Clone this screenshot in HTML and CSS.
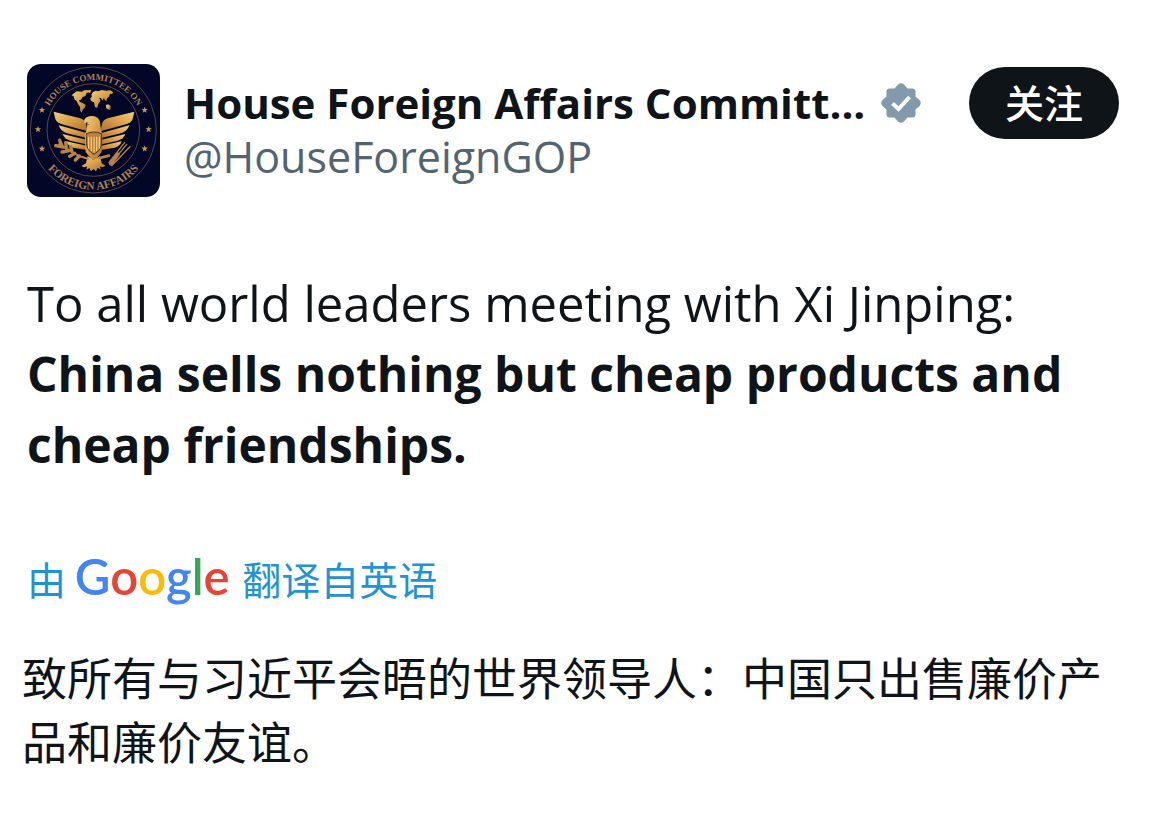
FILE: index.html
```html
<!DOCTYPE html>
<html lang="en">
<head>
    <meta charset="UTF-8">
    <meta name="viewport" content="width=device-width, initial-scale=1.0">
    <title>House Foreign Affairs Committee</title>
    <link rel="stylesheet" href="styles.css">
</head>
<body>
    <article class="post">
        <header class="post-header">
            <svg class="avatar" viewBox="21 24 399 399" role="img" aria-label="House Committee on Foreign Affairs seal">
                <defs>
                    <linearGradient id="gold" x1="0" y1="0" x2="1" y2="1">
                        <stop offset="0" stop-color="#f3cf7c"/>
                        <stop offset="0.5" stop-color="#d99f45"/>
                        <stop offset="1" stop-color="#a8702f"/>
                    </linearGradient>
                    <path id="arc-top" d="M70 222a150 150 0 0 1 300 0"/>
                    <path id="arc-bottom" d="M41 222a179 179 0 0 0 358 0"/>
                    <path id="star" d="M0-10 2.6-3.2 9.8-3 4 1.6 6 8.6 0 4.5-6 8.6-4 1.6-9.8-3-2.6-3.2z"/>
                    <g id="wing">
                        <path d="M101 167L178 186Q192 190 197 200L203 226 126 205Q110 200 106 189z"/>
                        <path d="M116 208L200 231 204 247 141 232Q122 226 116 208z"/>
                        <path d="M128 234L202 252 205 266 151 254Q133 249 128 234z"/>
                        <path d="M139 256L203 270 206 283 160 275Q144 271 139 256z"/>
                    </g>
                </defs>
                <rect x="21" y="24" width="399" height="399" fill="#020727"/>
                <g fill="none" stroke="#85684f" stroke-width="2">
                    <circle cx="220" cy="222" r="189"/>
                    <circle cx="220" cy="222" r="139"/>
                </g>
                <g class="seal-text">
                    <text font-size="27"><textPath href="#arc-top" startOffset="50%">HOUSE COMMITTEE ON</textPath></text>
                    <text font-size="34"><textPath href="#arc-bottom" startOffset="50%">FOREIGN AFFAIRS</textPath></text>
                </g>
                <g fill="#c99858">
                    <use href="#star" x="66" y="162"/>
                    <use href="#star" x="54" y="220"/>
                    <use href="#star" x="66" y="278"/>
                    <use href="#star" x="374" y="162"/>
                    <use href="#star" x="386" y="220"/>
                    <use href="#star" x="374" y="278"/>
                </g>
                <g fill="url(#gold)">
                    <path d="M162 112l8-6 16 1 6-4 14-1 2 6-8 3-4 9-8 3-5 8-6 2 3 5 8 3 9 6-3 8-6 6-3 9-4-5-1-12-6-9-4-9-6-4-3-10-6-3z"/>
                    <path d="M206 103l8-2-3 9-5 1z"/>
                    <path d="M214 116l4-7 9-5 8 2 10-4 14 2 12-1 9 6-4 5-6-1-3 9-6 5-2 8-5-4-2-6-5 9-4-8-6-1 3 5 1 6-6 7-3 12-7-1-3-15-9-4-2-8 5-6z"/>
                    <path d="M258 147l7-2 7 6-1 10-9-1-4-5z"/>
                </g>
                <g fill="url(#gold)">
                    <use href="#wing"/>
                    <use href="#wing" transform="matrix(-1 0 0 1 444 0)"/>
                    <path d="M193 191c4-8 14-12 25-11 13 1 21 9 22 19l3 22 5 16-3 51-17 21-6 4-8-4-17-21-3-51 7-18 1-21-9 5z"/>
                    <path d="M203 300l17 12 20-12 5 22 12 8-11 4-6-3 2 10-9-6-5 11-8-7-7 7-5-10-9 5 2-10-9 3-8-4 14-8z"/>
                </g>
                <path d="M199 233q22-10 46 0v29q-2 22-23 33-21-11-23-33z" fill="#ba8037" stroke="#4c351e" stroke-width="3"/>
                <path d="M206 242v36M214 242v43M222 242v48M230 242v43M238 242v36" stroke="#f0c578" stroke-width="4"/>
                <path d="M199 204q5 3 9 1" fill="none" stroke="#654522" stroke-width="2"/>
                <g fill="none" stroke="#b98343" stroke-linecap="round">
                    <path d="M204 308l-25-7-62-36" stroke-width="6"/>
                    <path d="M130 273l-23-4M126 270l-7-17M140 279l-3-19M148 284l-22 4M156 287l-4-15M164 292l-15 9M178 300l-12 12" stroke-width="10"/>
                    <path d="M239 306l28-7" stroke-width="8"/>
                    <path d="M270 326l50-61M275 329l55-57M267 319l47-59" stroke-width="4"/>
                    <path d="M273 322l20-27" stroke-width="12"/>
                </g>
            </svg>
            <div class="account">
                <div class="account-name">
                    <h1>House Foreign Affairs Committ...</h1>
                    <svg class="badge" viewBox="0 0 40 40" role="img" aria-label="Verified account">
                        <path d="M17 1.5Q20-1 23 1.5L26.500 5.500H31.500Q34.500 5.500 34.500 8.500V13.500L38.500 17Q41 20 38.500 23L34.500 26.500V31.500Q34.500 34.500 31.500 34.500H26.500L23 38.500Q20 41 17 38.500L13.500 34.500H8.500Q5.500 34.500 5.500 31.500V26.500L1.500 23Q-1 20 1.500 17L5.500 13.500V8.500Q5.500 5.500 8.500 5.500H13.500Z" fill="#829aab"/>
                        <path d="M11.500 20.500l6 5.500L28.500 14" fill="none" stroke="#fff" stroke-width="4"/>
                    </svg>
                </div>
                <p class="handle">@HouseForeignGOP</p>
            </div>
            <button type="button" class="follow">关注</button>
        </header>
        <p class="post-text">To all world leaders meeting with Xi Jinping: <strong>China sells nothing but cheap products and cheap friendships.</strong></p>
        <p class="translated-by" lang="zh-CN">由 <span class="google"><span class="blue">G</span><span class="red">o</span><span class="yellow">o</span><span class="blue">g</span><span class="green">l</span><span class="red">e</span></span> 翻译自英语</p>
        <p class="translation" lang="zh-CN">致所有与习近平会晤的世界领导人：中国只出售廉价产品和廉价友谊。</p>
    </article>
</body>
</html>
```

FILE: styles.css
```css
body {
    font-family: "Open Sans", "Noto Sans CJK SC", sans-serif;
    margin: 0;
    background-color: #fff;
    color: #0f1419;
}
h1, p {
    margin: 0;
}
.post {
    padding: 64px 51px 48px 27px;
}
.post-header {
    display: flex;
    align-items: flex-start;
    gap: 24px;
}
.avatar {
    flex: none;
    width: 133px;
    height: 133px;
    border-radius: 14px;
}
.seal-text {
    font-family: "Liberation Serif", serif;
    font-weight: 700;
    fill: #b08058;
    text-anchor: middle;
}
.account {
    flex: 1;
    min-width: 0;
    padding-top: 12px;
}
.account-name {
    display: flex;
    align-items: center;
    gap: 16px;
}
.account-name h1 {
    font-size: 42px;
    line-height: 54px;
    font-weight: 700;
    white-space: nowrap;
}
.badge {
    flex: none;
    width: 40px;
    height: 40px;
}
.handle {
    color: #536471;
    font-size: 43px;
    line-height: 54px;
}
.follow {
    flex: none;
    margin-top: 3px;
    width: 150px;
    height: 72px;
    padding: 0 0 4px;
    border: none;
    border-radius: 36px;
    background-color: #0f1419;
    color: #fff;
    font-family: "Noto Sans CJK SC", sans-serif;
    font-size: 39px;
    font-weight: 500;
    cursor: pointer;
}
.post-text {
    margin-top: 71px;
    font-size: 49px;
    line-height: 70px;
}
.post-text strong {
    font-size: 48px;
}
.translated-by {
    margin-top: 61px;
    color: #1d93d8;
    font-family: "Noto Sans CJK SC", sans-serif;
    font-size: 39px;
    font-weight: 400;
    line-height: 70px;
}
.google {
    margin-right: 4px;
    font-family: Lato, sans-serif;
    font-size: 49px;
    font-weight: 600;
}
.blue {
    color: #4285f4;
}
.red {
    color: #ea4335;
}
.yellow {
    color: #fbbc05;
}
.green {
    color: #34a853;
}
.translation {
    margin: 32px 0 0 -5px;
    font-family: "Noto Sans CJK SC", sans-serif;
    font-size: 45px;
    font-weight: 400;
    line-height: 64px;
}
```
